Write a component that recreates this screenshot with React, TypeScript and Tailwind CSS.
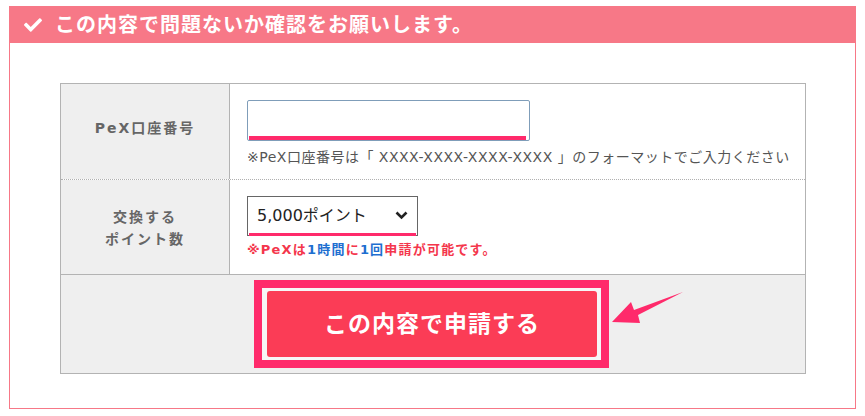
import { ChangeEvent, useState } from "react";

const font = "font-['DejaVu_Sans','Noto_Sans_CJK_JP',sans-serif]";

function CheckIcon() {
  return (
    <svg width="18" height="18" viewBox="0 0 512 512" className="shrink-0">
      <path
        fill="#fff"
        d="M173.9 439.4l-166.4-166.4c-10-10-10-26.2 0-36.2l36.2-36.2c10-10 26.2-10 36.2 0L192 312.7 432.1 72.6c10-10 26.2-10 36.2 0l36.2 36.2c10 10 10 26.2 0 36.2l-294.4 294.4c-10 10-26.2 10-36.2 0z"
      />
    </svg>
  );
}

function Arrow() {
  return (
    <svg
      width="75"
      height="36"
      viewBox="0 0 75 36"
      className="absolute left-[549px] top-[15px]"
    >
      <polygon
        fill="#ff2a6b"
        points="2,32 21,12 24,20 73,2 28,25 30,33"
      />
    </svg>
  );
}

export default function App() {
  const [account, setAccount] = useState("");
  const [points, setPoints] = useState("5000");

  return (
    <div className={`w-[865px] h-[416px] bg-white pt-[6px] pl-[9px] ${font}`}>
      <div className="w-[847px]">
        <div className="h-[37px] bg-[#f77887] flex items-center pl-[15px] gap-[13px]">
          <CheckIcon />
          <h2 className="text-white font-bold text-[20px] tracking-[1px] leading-none">
            この内容で問題ないか確認をお願いします。
          </h2>
        </div>

        <div className="h-[366px] border border-t-0 border-[#f77887] pt-[40px] pl-[50px]">
          <div className="w-[746px] border border-[#b3b3b3]">
            {/* PeX口座番号 */}
            <div className="flex h-[96px] border-b border-dotted border-[#b0b0b0]">
              <div className="w-[169px] shrink-0 bg-[#efefef] border-r border-[#b3b3b3] flex items-center justify-center pb-[6px]">
                <p className="text-[14px] font-bold text-[#666] tracking-[2px]">
                  PeX口座番号
                </p>
              </div>
              <div className="pl-[17px] pt-[16px]">
                <div className="relative w-[283px] h-[41px]">
                  <input
                    value={account}
                    onChange={(e: ChangeEvent<HTMLInputElement>) =>
                      setAccount(e.target.value)
                    }
                    className="w-full h-full border border-[#7f9db9] rounded-[2px] bg-white px-2 outline-none"
                  />
                  <span className="absolute left-[2px] right-[4px] bottom-[1px] h-[4px] bg-[#ff2a6b]" />
                </div>
                <p className="mt-[8px] text-[14px] text-[#555] tracking-[0.5px] leading-[16px] whitespace-nowrap">
                  ※PeX口座番号は「 XXXX-XXXX-XXXX-XXXX 」のフォーマットでご入力ください
                </p>
              </div>
            </div>

            {/* 交換するポイント数 */}
            <div className="flex h-[95px] border-b border-[#b3b3b3]">
              <div className="w-[169px] shrink-0 bg-[#efefef] border-r border-[#b3b3b3] flex items-center justify-center pt-[2px]">
                <p className="text-[14px] font-bold text-[#666] tracking-[2px] leading-[22px] text-center">
                  交換する
                  <br />
                  ポイント数
                </p>
              </div>
              <div className="pl-[17px] pt-[16px]">
                <div className="relative w-[171px] h-[40px]">
                  <select
                    value={points}
                    onChange={(e: ChangeEvent<HTMLSelectElement>) =>
                      setPoints(e.target.value)
                    }
                    className="w-full h-full appearance-none border border-[#666] bg-white pl-[9px] text-[16px] text-[#222] outline-none"
                  >
                    <option value="5000">5,000ポイント</option>
                    <option value="10000">10,000ポイント</option>
                  </select>
                  <svg
                    width="13"
                    height="9"
                    viewBox="0 0 13 9"
                    className="absolute right-[10px] top-[15px] pointer-events-none"
                  >
                    <path
                      d="M1.5 1.5 L6.5 6.5 L11.5 1.5"
                      fill="none"
                      stroke="#222"
                      strokeWidth="2.6"
                    />
                  </svg>
                  <span className="absolute left-[2px] right-[2px] bottom-0 h-[3px] bg-[#ff2a6b]" />
                </div>
                <p className="mt-[6px] text-[13px] font-bold text-[#f4364c] tracking-[1.2px] leading-[16px] whitespace-nowrap">
                  ※PeXは<span className="text-[#1e6fd0]">1時間</span>に
                  <span className="text-[#1e6fd0]">1回</span>申請が可能です。
                </p>
              </div>
            </div>

            {/* 申請ボタン */}
            <div className="relative h-[98px] bg-[#efefef] flex items-center justify-center pr-[3px]">
              <div className="w-[355px] h-[88px] border-[8px] border-[#ff2a6b] bg-[#f6f6f6] pl-[5px] pr-[4px] py-[3px]">
                <button className="w-full h-full rounded-[3px] bg-[#fb3c56] text-white text-[23px] font-bold tracking-[1px]">
                  この内容で申請する
                </button>
              </div>
              <Arrow />
            </div>
          </div>
        </div>
      </div>
    </div>
  );
}
